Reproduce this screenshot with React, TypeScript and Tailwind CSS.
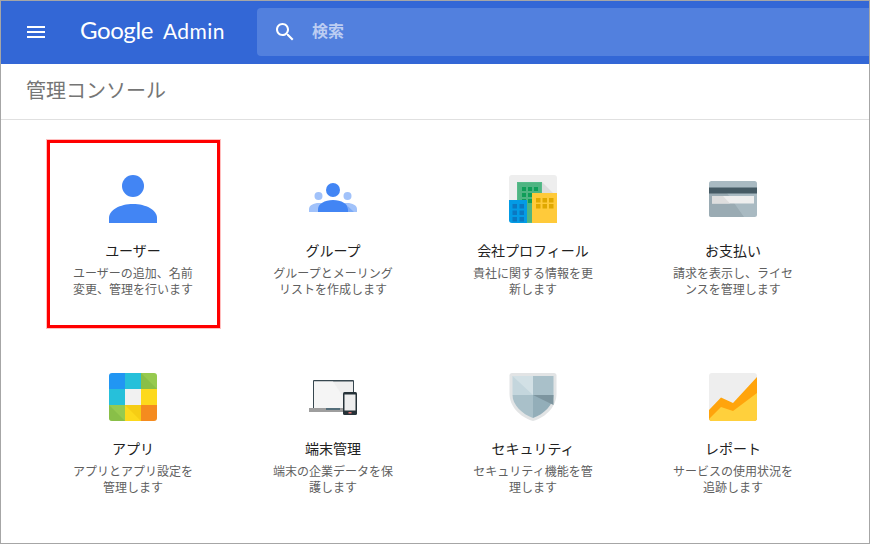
import type { ReactNode } from "react";

function Icon({ children }: { children: ReactNode }) {
  return (
    <svg viewBox="0 0 48 48" className="h-12 w-12 shrink-0">
      {children}
    </svg>
  );
}

const UserIcon = (
  <Icon>
    <circle cx="24" cy="11" r="11" fill="#4285f4" />
    <path d="M0 48v-5c0-8 11-14 24-14s24 6 24 14v5z" fill="#4285f4" />
  </Icon>
);

const GroupIcon = (
  <Icon>
    <circle cx="9.500" cy="21" r="4" fill="#a1c2fa" />
    <circle cx="38.500" cy="21" r="4" fill="#a1c2fa" />
    <path d="M0 37v-3c0-3.500 4.500-6 10-6s10 2.500 10 6v3z" fill="#a1c2fa" />
    <path d="M28 37v-3c0-3.500 4.500-6 10-6s10 2.500 10 6v3z" fill="#a1c2fa" />
    <path d="M9 37v-3c0-5 6.500-9 15-9s15 4 15 9v3z" fill="#4285f4" />
    <path d="M39 37v-3c0-2-1-4-3-5.500l9 8.500z" fill="#7baaf7" />
    <circle cx="24" cy="15" r="7" fill="#4285f4" />
  </Icon>
);

const CompanyIcon = (
  <Icon>
    <rect width="48" height="48" rx="3" fill="#eeeeee" />
    <path d="M33 7 48 22v8H33z" fill="#dcdcdc" />
    <rect x="8" y="7" width="25" height="41" fill="#57bb8a" />
    <rect x="9" y="8" width="23" height="39" fill="#4fb482" />
    {[12, 18, 24].map((x) =>
      [11, 17, 23].map((y) => <rect key={`${x}-${y}`} x={x + 1} y={y + 1} width="4" height="4" fill="#0f9d58" />),
    )}
    <rect x="23" y="18" width="25" height="30" fill="#ffca3a" />
    {[27, 33.5, 40].map((x) =>
      [23, 29].map((y) => <rect key={`${x}-${y}`} x={x} y={y} width="4.5" height="4.5" fill="#e0a800" />),
    )}
    <path d="M0 25h18v23H3a3 3 0 0 1-3-3z" fill="#039be5" />
    {[3.5, 10.5].map((x) =>
      [29, 35.5, 42].map((y) => <rect key={`${x}-${y}`} x={x} y={y} width="4.5" height="4.5" fill="#0a78c2" />),
    )}
  </Icon>
);

const CardIcon = (
  <Icon>
    <rect y="6" width="48" height="36" rx="2.500" fill="#a9bac2" />
    <path d="M0 18h18l17 24H2.500A2.500 2.500 0 0 1 0 39.500z" fill="#9aabb3" />
    <rect y="12.500" width="48" height="6" fill="#455a64" />
    <rect x="3" y="21" width="42" height="7.500" fill="#eeeeee" />
    <path d="M3 21h11l7 7.500H3z" fill="#dedede" />
  </Icon>
);

const AppsIcon = (
  <Icon>
    <defs>
      <clipPath id="apps-clip">
        <rect width="48" height="48" rx="3" />
      </clipPath>
    </defs>
    <g clipPath="url(#apps-clip)">
      <rect width="16" height="16" fill="#2196f3" />
      <rect x="16" width="16" height="16" fill="#26c0da" />
      <rect x="32" width="16" height="16" fill="#96ca4f" />
      <rect y="16" width="16" height="16" fill="#26c0da" />
      <rect x="16" y="16" width="16" height="16" fill="#f1f1f1" />
      <rect x="32" y="16" width="16" height="16" fill="#fdd91c" />
      <rect y="32" width="16" height="16" fill="#96ca4f" />
      <rect x="16" y="32" width="16" height="16" fill="#fdd91c" />
      <rect x="32" y="32" width="16" height="16" fill="#f58b1f" />
      <path d="M32 0v16h16z" fill="#7cb342" opacity=".5" />
      <path d="M0 32v16h16z" fill="#7cb342" opacity=".5" />
      <path d="M16 32h16v16z" fill="#f2c40f" opacity=".6" />
    </g>
  </Icon>
);

const DevicesIcon = (
  <Icon>
    <path d="M4 8a1 1 0 0 1 1-1h39a1 1 0 0 1 1 1v28H4z" fill="#37474f" />
    <rect x="5" y="8.500" width="39" height="27" fill="#eeeeee" />
    <path d="M5 8.500h19l18 27H5z" fill="#f5f5f5" />
    <rect y="35" width="38" height="4" fill="#9e9e9e" />
    <rect x="17" y="35" width="14" height="2" fill="#546e7a" />
    <rect x="34" y="19" width="14" height="23" rx="1.500" fill="#263238" />
    <rect x="35.500" y="21.500" width="11" height="16" fill="#eeeeee" />
    <rect x="39.500" y="39" width="3" height="1.500" fill="#e57373" />
  </Icon>
);

const ShieldIcon = (
  <Icon>
    <path d="M3 0h42c1.500 0 2.500 1 2.500 2.500V21c0 12-10 23-23.500 27C10.500 44 .5 33 .5 21V2.500C.5 1 1.500 0 3 0z" fill="#e2e4e5" />
    <path d="M3.500 3H24v19H3.500z" fill="#c4d6dd" />
    <path d="M3.500 3H24v19z" fill="#d2e0e5" />
    <path d="M24 3h20.500v19H24z" fill="#a9c0c9" />
    <path d="M3.500 22H24v23C13 41 3.500 32 3.500 22z" fill="#a9c0c9" />
    <path d="M24 22h20.500c0 10-9.500 19-20.500 23z" fill="#93aeb9" />
    <path d="M24 22h20.500v10z" fill="#7d959f" />
  </Icon>
);

const ReportIcon = (
  <Icon>
    <defs>
      <clipPath id="report-clip">
        <rect width="48" height="48" rx="3" />
      </clipPath>
    </defs>
    <g clipPath="url(#report-clip)">
      <rect width="48" height="48" fill="#eeeeee" />
      <path d="M0 37 12 24.500 24 30 48 4v44H0z" fill="#ffa40c" />
      <path d="M0 46 12 34 24 38 48 20v28H0z" fill="#ffd03c" />
    </g>
  </Icon>
);

const ITEMS = [
  { title: "ユーザー", desc: "ユーザーの追加、名前変更、管理を行います", icon: UserIcon },
  { title: "グループ", desc: "グループとメーリングリストを作成します", icon: GroupIcon },
  { title: "会社プロフィール", desc: "貴社に関する情報を更新します", icon: CompanyIcon },
  { title: "お支払い", desc: "請求を表示し、ライセンスを管理します", icon: CardIcon },
  { title: "アプリ", desc: "アプリとアプリ設定を管理します", icon: AppsIcon },
  { title: "端末管理", desc: "端末の企業データを保護します", icon: DevicesIcon },
  { title: "セキュリティ", desc: "セキュリティ機能を管理します", icon: ShieldIcon },
  { title: "レポート", desc: "サービスの使用状況を追跡します", icon: ReportIcon },
];

export default function App() {
  return (
    <div className="h-[544px] w-[870px] overflow-hidden border border-[#a6a6a6] bg-white font-['Roboto','Noto_Sans_CJK_JP',sans-serif]">
      <header className="flex h-[63px] items-start bg-[#3367d6]">
        <svg viewBox="0 0 24 24" className="mt-[19px] ml-[23px] h-6 w-6 fill-white">
          <path d="M3 18h18v-2H3v2zm0-5h18v-2H3v2zm0-7v2h18V6H3z" />
        </svg>
        <div className="mt-[17px] ml-[32px] flex w-[177px] items-baseline text-white font-['Lato',sans-serif]">
          <span className="text-[24px] leading-none tracking-[-0.4px]">Google</span>
          <span className="ml-[10px] text-[21px] leading-none tracking-[0.4px]">Admin</span>
        </div>
        <div className="mt-[7px] flex h-12 flex-1 items-center rounded-l bg-[#5280de]">
          <svg viewBox="0 0 24 24" className="ml-4 h-6 w-6 fill-white">
            <path d="M15.500 14h-.79l-.28-.27C15.410 12.590 16 11.110 16 9.500 16 5.910 13.090 3 9.500 3S3 5.910 3 9.500 5.910 16 9.500 16c1.610 0 3.090-.59 4.230-1.570l.27.28v.79l5 4.990L20.490 19l-4.990-5zm-6 0C7.010 14 5 11.990 5 9.500S7.010 5 9.500 5 14 7.010 14 9.500 11.990 14 9.500 14z" />
          </svg>
          <span className="ml-[15px] text-base font-bold text-[#bccdf2]">検索</span>
        </div>
      </header>

      <div className="flex h-[56px] items-center border-b border-[#e0e0e0] pb-[2px] pl-[25px]">
        <h1 className="text-xl font-normal text-[#757575]">管理コンソール</h1>
      </div>

      <div className="ml-[32px] grid w-[800px] grid-cols-4 pt-[55px]">
        {ITEMS.map((item, i) => (
          <div key={item.title} className="relative flex h-[198px] flex-col items-center">
            {i === 0 && (
              <div className="absolute top-[-35px] left-[14px] h-[188px] w-[173px] border-[3px] border-[#ff0000] shadow-[0_0_0_1px_rgba(255,0,0,0.25)]" />
            )}
            {item.icon}
            <div className="mt-[18px] text-sm leading-5 text-[#212121]">{item.title}</div>
            <p className="mt-[5px] w-[120px] text-center text-xs leading-4 text-[#5f5f5f]">{item.desc}</p>
          </div>
        ))}
      </div>
    </div>
  );
}
